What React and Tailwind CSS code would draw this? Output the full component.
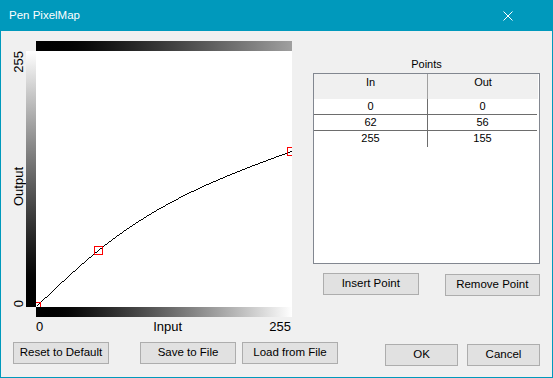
import { useMemo } from 'react'

const POINTS = [
  [0, 0],
  [62, 56],
  [255, 155],
]

// natural cubic spline through the control points
function makeSpline(pts) {
  const n = pts.length
  const h = []
  for (let i = 0; i < n - 1; i++) h.push(pts[i + 1][0] - pts[i][0])
  const a = [], b = [], c = [], d = []
  for (let i = 1; i < n - 1; i++) {
    a.push(h[i - 1])
    b.push(2 * (h[i - 1] + h[i]))
    c.push(h[i])
    d.push(6 * ((pts[i + 1][1] - pts[i][1]) / h[i] - (pts[i][1] - pts[i - 1][1]) / h[i - 1]))
  }
  const M = new Array(n).fill(0)
  const m = b.length
  for (let i = 1; i < m; i++) {
    const w = a[i] / b[i - 1]
    b[i] -= w * c[i - 1]
    d[i] -= w * d[i - 1]
  }
  for (let i = m - 1; i >= 0; i--) {
    M[i + 1] = (d[i] - (i < m - 1 ? c[i] * M[i + 2] : 0)) / b[i]
  }
  return (x) => {
    let i = 0
    while (i < n - 2 && x > pts[i + 1][0]) i++
    const t1 = pts[i + 1][0] - x
    const t0 = x - pts[i][0]
    return (
      (M[i] * t1 ** 3) / (6 * h[i]) +
      (M[i + 1] * t0 ** 3) / (6 * h[i]) +
      (pts[i][1] / h[i] - (M[i] * h[i]) / 6) * t1 +
      (pts[i + 1][1] / h[i] - (M[i + 1] * h[i]) / 6) * t0
    )
  }
}

function Curve() {
  const d = useMemo(() => {
    const f = makeSpline(POINTS)
    let s = ''
    for (let x = 0; x <= 255; x++) {
      const y = 255 - Math.round(f(x))
      s += `${x === 0 ? 'M' : 'L'}${x + 0.5} ${y + 0.5} `
    }
    return s
  }, [])

  return (
    <svg width="256" height="256" className="block">
      <path d={d} fill="none" stroke="#000" strokeWidth="1" shapeRendering="crispEdges" />
      {POINTS.map(([x, y]) => (
        <rect
          key={x}
          x={x - 4 + 0.5}
          y={255 - y - 4 + 0.5}
          width="8"
          height="8"
          fill="none"
          stroke="#ff0000"
          strokeWidth="1"
          shapeRendering="crispEdges"
        />
      ))}
    </svg>
  )
}

function Btn({ children, className = '' }) {
  return (
    <button
      type="button"
      className={`h-[22px] border border-[#adadad] bg-[#e1e1e1] text-[11.5px] text-black leading-none ${className}`}
    >
      {children}
    </button>
  )
}

const rows = [
  ['0', '0'],
  ['62', '56'],
  ['255', '155'],
]

export default function App() {
  return (
    <div className="flex h-[378px] w-[553px] flex-col bg-[#0099bc] font-['Liberation_Sans',Arial,sans-serif]">
      <div className="flex h-[31px] shrink-0 items-center justify-between pl-[9px] pr-[40px] text-white">
        <span className="text-[11.5px]">Pen PixelMap</span>
        <svg width="10" height="10" viewBox="0 0 10 10" className="mt-[1px]">
          <path d="M0.5 0.5 L9.5 9.5 M9.5 0.5 L0.5 9.5" stroke="#fff" strokeWidth="1" />
        </svg>
      </div>

      <div className="mx-px mb-px flex flex-1 flex-col bg-[#f0f0f0] text-black">
        <div className="flex items-start pt-[10px]">
          {/* graph */}
          <div className="ml-[10px] grid grid-cols-[15px_10px_256px] grid-rows-[10px_256px_10px_auto] text-[13px]">
            <div />
            <div />
            <div className="bg-gradient-to-r from-black to-[#a0a0a0]" />

            <div className="flex flex-col items-center justify-between leading-none">
              <span className="rotate-180 [writing-mode:vertical-rl]">255</span>
              <span className="rotate-180 [writing-mode:vertical-rl]">Output</span>
              <span className="rotate-180 [writing-mode:vertical-rl]">0</span>
            </div>
            <div className="bg-gradient-to-t from-black to-white" />
            <div className="overflow-hidden bg-white">
              <Curve />
            </div>

            <div />
            <div />
            <div className="bg-gradient-to-r from-black to-white" />

            <div />
            <div />
            <div className="mt-[2px] flex leading-[15px]">
              <span>0</span>
              <span className="ml-[110px]">Input</span>
              <span className="ml-auto mr-px">255</span>
            </div>
          </div>

          {/* points panel */}
          <div className="ml-[21px] flex w-[227px] flex-col text-[11px]">
            <div className="mt-[14px] text-center leading-[18px]">Points</div>
            <div className="h-[191px] border border-[#828790] bg-white">
              <div className="flex h-[25px] bg-[#f0f0f0] mr-px">
                <div className="w-[113px] pt-[2px] text-center leading-[13px]">In</div>
                <div className="w-px bg-[#a0a0a0]" />
                <div className="flex-1 pt-[2px] text-center leading-[13px]">Out</div>
              </div>
              {rows.map(([i, o], k) => (
                <div
                  key={k}
                  className={`mr-[2px] flex h-[16px] ${k < 2 ? 'border-b border-[#6d6d6d]' : ''}`}
                >
                  <div className="w-[113px] text-center leading-[15px]">{i}</div>
                  <div className="w-px bg-[#6d6d6d]" />
                  <div className="flex-1 text-center leading-[15px]">{o}</div>
                </div>
              ))}
            </div>
            <div className="mt-[9px] flex items-start">
              <Btn className="ml-[10px] w-[96px]">Insert Point</Btn>
              <Btn className="ml-[26px] mt-px w-[96px]">Remove Point</Btn>
            </div>
          </div>
        </div>

        <div className="mt-[8px] flex items-start pl-[12px]">
          <Btn className="w-[96px]">Reset to Default</Btn>
          <Btn className="ml-[31px] w-[96px]">Save to File</Btn>
          <Btn className="ml-[6px] w-[96px]">Load from File</Btn>
          <Btn className="ml-[47px] mt-[2px] w-[73px]">OK</Btn>
          <Btn className="ml-[9px] mt-[2px] w-[73px]">Cancel</Btn>
        </div>
      </div>
    </div>
  )
}
